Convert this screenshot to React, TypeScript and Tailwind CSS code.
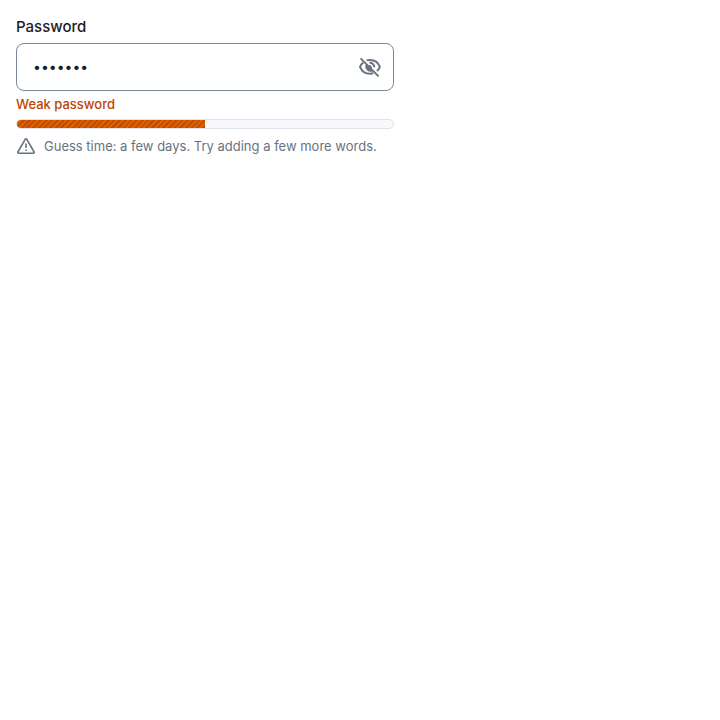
import { useState } from "react";

function HiddenIcon() {
  return (
    <svg viewBox="0 0 24 24" className="size-6" fill="none" stroke="currentColor" strokeWidth="2" aria-hidden="true">
      <path d="M8.600 5.400C9.700 5.100 10.800 5 12 5c4.800 0 8.300 2.700 9.900 6.800-.7 1.700-1.600 3.100-3 4.200" />
      <path d="M5.200 7.500C3.700 8.600 2.700 10.100 2 11.800c1.700 4.200 5.200 6.900 10 6.900 1.200 0 2.300-.1 3.300-.4" />
      <path d="M11.400 7.800a4.200 4.200 0 0 1 4.800 4.600" />
      <path d="M8 9l7.200 7A5.200 5.200 0 0 1 8 9z" fill="currentColor" stroke="none" />
      <path d="M9.500 10.500l3-.5 1.500 2.500-.5 2z" fill="currentColor" stroke="none" />
      <path d="M2.600 3.400l18 18" />
    </svg>
  );
}

function WarningIcon() {
  return (
    <svg viewBox="0 0 20 20" className="size-5 shrink-0" fill="none" stroke="currentColor" strokeWidth="1.6" aria-hidden="true">
      <path d="M9.200 3.300 1.900 16q-.4 1.200.7 1.200h14.800q1.100 0 .7-1.200L10.800 3.300q-.8-1.200-1.600 0z" strokeLinejoin="round" />
      <path d="M10 7.500v4.500M10 13.500V15" />
    </svg>
  );
}

export default function App() {
  const [value, setValue] = useState("letmein");
  const [visible, setVisible] = useState(false);
  return (
    <main className="px-4 py-[15px] font-['Inter',sans-serif]">
      <div className="flex w-full max-w-[378px] flex-col">
        <label htmlFor="password" className="pb-1 text-[15px] leading-6 font-medium text-[#1c1c28]">
          Password
        </label>
        <div className="flex h-12 items-center rounded-lg border border-[#7b8794] bg-white pr-[11px] pl-4">
          <input
            id="password"
            type={visible ? "text" : "password"}
            value={value}
            onChange={(e) => setValue(e.target.value)}
            aria-describedby="password-hint"
            className="h-full min-w-0 flex-1 bg-transparent pb-0.5 text-sm text-[#1c1c28] outline-none"
          />
          <button
            type="button"
            aria-label={visible ? "Hide password" : "Show password"}
            onClick={() => setVisible(!visible)}
            className="text-[#69737f]"
          >
            <HiddenIcon />
          </button>
        </div>
        <p className="pt-1 text-[13px] leading-[18px] font-medium text-[#bd4500]">Weak password</p>
        <div
          role="progressbar"
          aria-label="Password strength"
          aria-valuenow={50}
          aria-valuemin={0}
          aria-valuemax={100}
          className="mt-1.5 h-[10px] overflow-hidden rounded-full border border-[#dfe4ec] bg-[#f8f9fc]"
        >
          <div className="h-full w-1/2 bg-[repeating-linear-gradient(135deg,#c34a00_0px,#c34a00_2px,#dc6200_2px,#dc6200_4px)]" />
        </div>
        <div id="password-hint" className="flex items-center gap-2 pt-[7px] text-[#69737f]">
          <WarningIcon />
          <p className="text-[13px] leading-[18px]">Guess time: a few days. Try adding a few more words.</p>
        </div>
      </div>
    </main>
  );
}
